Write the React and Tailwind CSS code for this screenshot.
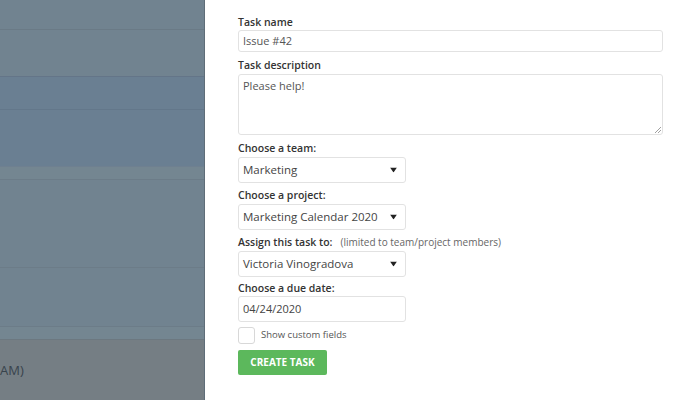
import React from "react";

const Caret = () => (
  <svg width="7" height="5" viewBox="0 0 7 5" className="absolute right-[8px] top-1/2 -translate-y-1/2">
    <path d="M0 0 H7 L3.5 5 Z" fill="#222" />
  </svg>
);

function Select({ value }) {
  return (
    <div className="relative flex h-[26px] w-[168px] items-center rounded-[3px] border border-[#e2e2e2] bg-white pl-[4px] text-[11.5px] text-[#444]">
      {value}
      <Caret />
    </div>
  );
}

export default function App() {
  return (
    <div className="flex h-[400px] w-[700px] overflow-hidden bg-white" style={{ fontFamily: '"Open Sans", "Noto Sans", sans-serif' }}>
      <div className="flex w-[205px] shrink-0 flex-col border-r border-[#5f6d78] bg-[#718390]">
        <div className="h-[30px] border-b border-[#6a7a86]" />
        <div className="h-[47px] border-b border-[#647588]" />
        <div className="h-[33px] border-b border-[#63778a] bg-[#6a7f92]" />
        <div className="h-[57px] border-b border-[#6f8090] bg-[#6a7f92]" />
        <div className="h-[13px] border-b border-[#6c7c88] bg-[#748691]" />
        <div className="h-[88px] border-b border-[#6c7c88]" />
        <div className="h-[59px] border-b border-[#6c7c88]" />
        <div className="h-[13px] border-b border-[#6c7880] bg-[#748691]" />
        <div className="flex flex-1 items-start bg-[#757e84] pt-[21px] text-[13px] text-[#38434c]">AM)</div>
      </div>
      <div className="flex flex-1 flex-col pl-[33px] pr-[37px] pt-[15px] text-[#333]">
        <div className="text-[10.5px] font-semibold leading-[15px]">Task name</div>
        <div className="mt-[0px] flex h-[22px] items-center rounded-[3px] border border-[#e2e2e2] pl-[4px] text-[11px] text-[#555]">Issue #42</div>
        <div className="mt-[6px] text-[10.5px] font-semibold leading-[15px]">Task description</div>
        <div className="relative mt-[1px] h-[61px] rounded-[3px] border border-[#e2e2e2] pl-[4px] pt-[3px] text-[11px] text-[#555]">
          Please help!
          <svg width="7" height="7" viewBox="0 0 7 7" className="absolute bottom-[1px] right-[1px]">
            <path d="M1 7 L7 1 M4 7 L7 4" stroke="#888" strokeWidth="0.8" />
          </svg>
        </div>
        <div className="mt-[6px] text-[10.5px] font-semibold leading-[15px]">Choose a team:</div>
        <div className="mt-[1px]"><Select value="Marketing" /></div>
        <div className="mt-[5px] text-[10.5px] font-semibold leading-[15px]">Choose a project:</div>
        <div className="mt-[1px]"><Select value="Marketing Calendar 2020" /></div>
        <div className="mt-[5px] flex items-baseline leading-[15px]">
          <span className="text-[10.5px] font-semibold">Assign this task to:</span>
          <span className="ml-[8px] text-[10px] text-[#666]">(limited to team/project members)</span>
        </div>
        <div className="mt-[1px]"><Select value="Victoria Vinogradova" /></div>
        <div className="mt-[4px] text-[10.5px] font-semibold leading-[15px]">Choose a due date:</div>
        <div className="mt-[0px] flex h-[26px] w-[168px] items-center rounded-[3px] border border-[#e2e2e2] pl-[4px] text-[11px] text-[#444]">04/24/2020</div>
        <div className="mt-[5px] flex items-center">
          <div className="h-[17px] w-[17px] rounded-[3px] border border-[#d8d8d8]" />
          <span className="ml-[6px] text-[9.5px] text-[#555]">Show custom fields</span>
        </div>
        <button className="mt-[6px] flex h-[25px] w-[89px] items-center justify-center rounded-[2px] bg-[#5cb85c] text-[10px] font-bold text-white">CREATE TASK</button>
      </div>
    </div>
  );
}
